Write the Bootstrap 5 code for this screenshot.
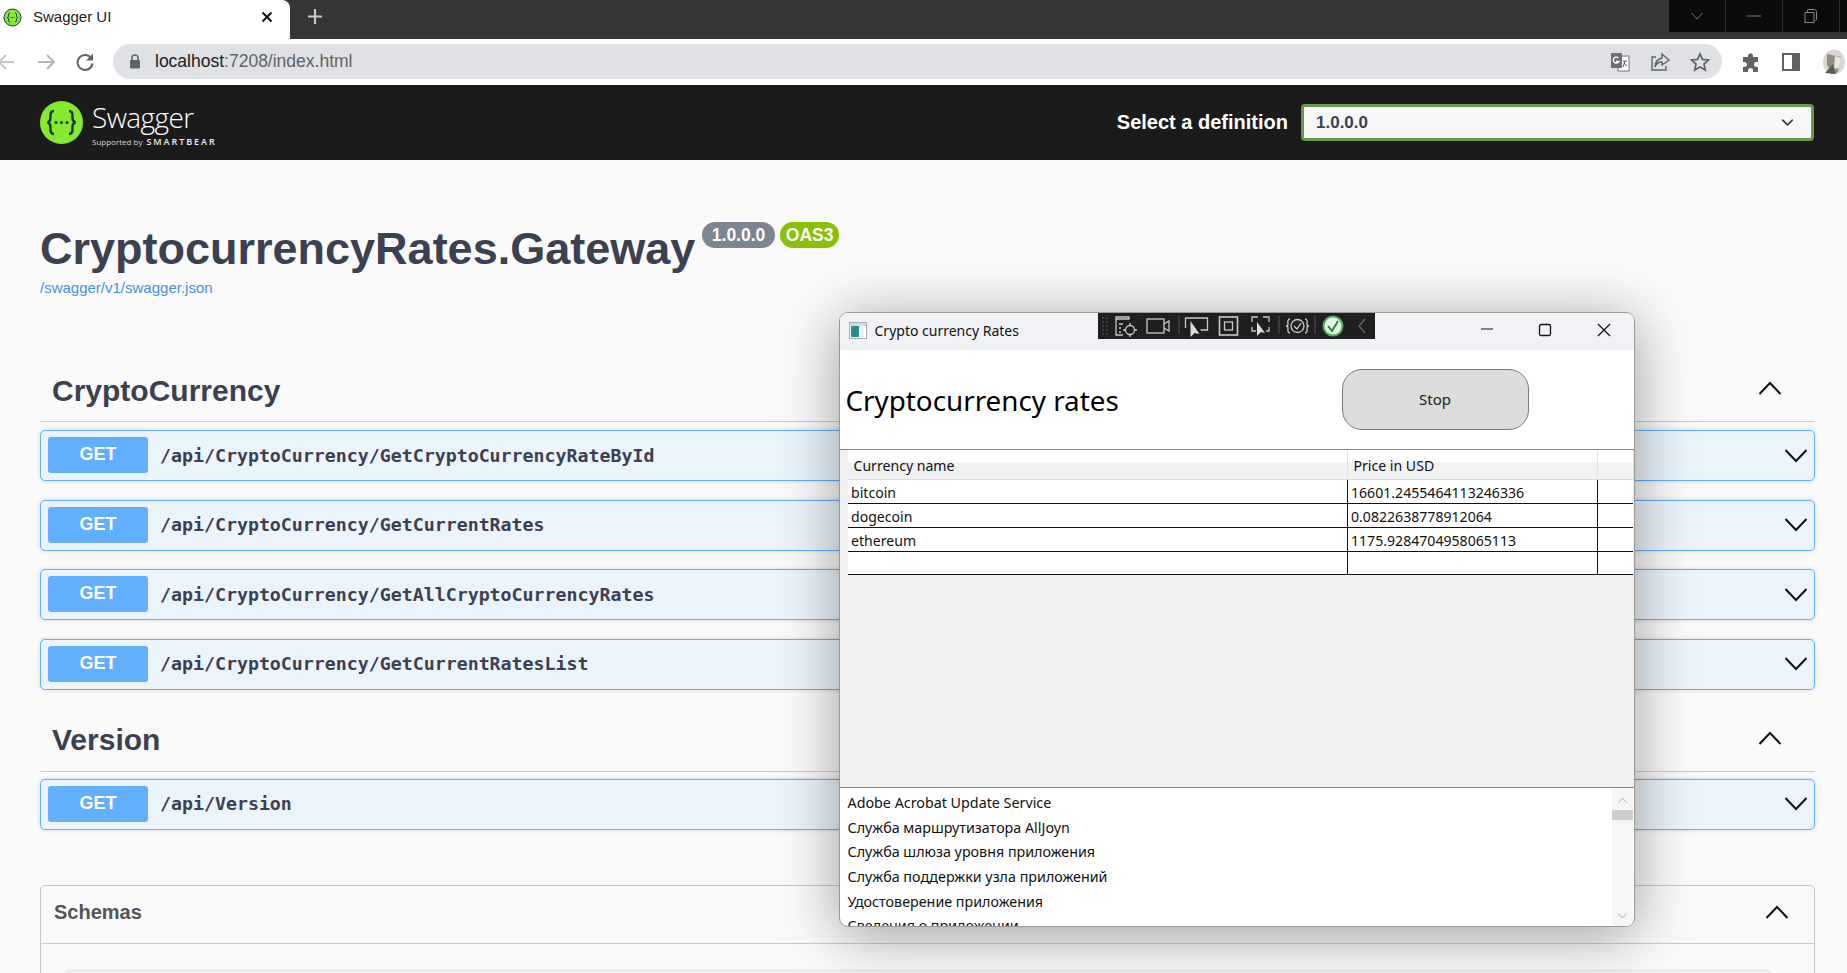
<!DOCTYPE html>
<html lang="en">
<head>
<meta charset="utf-8">
<title>Swagger UI</title>
<link href="https://cdn.jsdelivr.net/npm/bootstrap@5.3.0/dist/css/bootstrap.min.css" rel="stylesheet">
<style>
html,body{height:973px;overflow:hidden;background:#fafafa;}
body{font-family:"Liberation Sans",Arial,sans-serif;color:#3b4151;}
svg{display:block;flex:none;}
.tabstrip{height:39px;background:#353535;}
.browser-tab{width:290px;background:#fff;color:#202124;font-size:15px;padding:0 0 5px 3px;border-top-right-radius:8px;}
.tab-label{margin-left:11px;}
.tab-close{margin-left:auto;margin-right:17px;}
.newtab{margin-left:17px;}
.win-ctrls{height:32px;background:#0b0b0b;width:178px;}
.win-ctrl{width:57px;border-right:1px solid #2e2e2e;}
.toolbar{height:46px;background:#fff;}
.omni{width:1609px;height:35px;margin-left:24px;margin-top:-1px;background:#dfe1e5;border-radius:18px;padding:0 12px 0 16px;font-size:17.5px;}
.url-host{color:#202124;margin-left:14px;}
.url-rest{color:#5f6368;}
.tool-gap{gap:20px;}
.ext-icons{margin-left:20px;gap:22px;}
.swagger-bar{height:75px;background:#1b1b1b;padding:0 33px 0 40px;}
.brand-block{margin-left:9px;margin-top:3px;}
.brand-name{font-family:"Open Sans",sans-serif;font-weight:300;color:#fff;font-size:28px;line-height:30px;letter-spacing:-.6px;}
.brand-sub{font-family:"Open Sans",sans-serif;color:#d8d8d8;font-size:8px;line-height:10px;margin-top:5px;}
.brand-sub b{font-size:9px;letter-spacing:1.95px;margin-left:2px;color:#eee;font-weight:600;}
.def-label{color:#fff;font-weight:700;font-size:20px;margin-right:13px;margin-top:-2px;}
.def-select{width:513px;height:37px;padding:0 12px;font-weight:700;font-size:17px;color:#3b4151;background-color:#f7f7f7;border:3px solid #6a9a4e;border-radius:4px;background-size:17px 13px;background-position:right 15px center;}
.page-main{padding:0 32px 0 40px;height:813px;overflow:hidden;}
.info-block{padding-top:62px;height:198px;}
.api-title{font-size:45px;font-weight:700;line-height:54px;margin:0;color:#3b4151;}
.ver-pill{font-size:17.5px;height:26px;line-height:20px;padding:3px 9.5px;margin-left:7px;margin-top:0;border-radius:13px;}
.pill-grey{background:#7d8492;color:#fff;}
.pill-green{background:#89bf04;color:#fff;padding:3px 6px;margin-left:5px;}
.spec-link{font-size:15px;color:#4990e2;text-decoration:none;line-height:18px;display:block;margin-top:3px;}
.tag-row{height:64px;border-bottom:1.5px solid #c9cacd;padding-left:12px;padding-right:33px;}
.tag-name{font-size:30px;font-weight:700;color:#3b4151;margin:0;padding-top:2px;}
.tag-chev{margin-bottom:3px;}
.op-row{height:51px;margin-top:18.5px;background:#ebf3fb;border:1.5px solid #61affe;border-radius:5px;padding:0 6px 0 7px;box-shadow:0 0 4px rgba(0,0,0,.15);}
.op-first{margin-top:8px;}
.op-first-v{margin-top:7px;}
.op-verb{width:100px;height:36px;background:#61affe;color:#fff;font-weight:700;font-size:18px;border-radius:3px;margin-top:-1px;padding:0;border:0;line-height:34px;}
.op-path{font-family:"DejaVu Sans Mono",monospace;font-weight:700;font-size:18.25px;color:#3b4151;margin-left:12px;}
.tag-version{margin-top:18px;}
.schemas-box{margin-top:55.5px;height:120px;border:1.5px solid #c5c6c9;border-radius:5px;}
.schemas-head{height:58px;border-bottom:1.5px solid #c9cacd;padding:0 25px 6px 13px;font-size:20px;font-weight:700;color:#555;}
.schemas-inner{height:30px;margin:25px 43px 0 25px;background:#eee;border-radius:4px;}
.desk-win{position:absolute;left:838.5px;top:312px;width:796px;height:615px;background:#fff;border:1px solid #9a9a9a;border-radius:9px;box-shadow:0 8px 60px rgba(0,0,0,.38);overflow:hidden;font-family:"Noto Sans",sans-serif;color:#111;z-index:5;}
.win-title{height:37px;background:#f0f2f6;font-size:14px;padding:0 0 2px 9px;position:relative;}
.win-title-text{margin-left:8px;}
.dev-bar{position:absolute;left:258px;top:0;}
.win-btns{position:absolute;left:641.5px;top:8px;}
.win-head{height:99px;padding-left:6px;}
.win-h{font-size:27.8px;margin:0;font-weight:400;color:#000;padding-top:3px;width:496px;}
.stop-btn{width:187px;height:61px;background:#dcdcdc;border:1.5px solid #7a7a7a;border-radius:20px;font-size:15px;color:#222;padding:0;font-family:inherit;}
.grid-area{height:339px;background:#f0f0f0;border-top:1.5px solid #6d8aa6;border-bottom:1.5px solid #6d8aa6;}
.rates-grid{width:100%;border-collapse:collapse;table-layout:fixed;font-size:14.1px;}
.rates-grid col.c0{width:8px;}
.rates-grid col.c1{width:499.5px;}
.rates-grid col.c2{width:250.5px;}
.rates-grid th{height:29px;font-weight:400;padding:2px 0 0 6px;background:linear-gradient(#fff 40%,#f0f1f3 45%,#f1f2f4);border-right:1px solid #e3e3e3;border-bottom:1px solid #dadada;}
.rates-grid td{height:23.6px;padding:3px 0 0 3.5px;background:#fff;border-right:1.5px solid #111;border-bottom:1.5px solid #111;line-height:20px;vertical-align:bottom;}
.rates-grid th.stub,.rates-grid td.stub{background:#f0f0f0;border:0;padding:0;}
.rates-grid td:last-child{border-right:0;}
.svc-list{height:138px;overflow:hidden;position:relative;padding:3px 0 0 8px;font-size:14.3px;}
.svc-item{height:24.7px;line-height:24.7px;padding:0;border:0;background:transparent;color:#111;white-space:nowrap;}
.svc-scroll{position:absolute;right:1px;top:0;bottom:0;width:21px;background:#f6f6f6;}
.svc-thumb{position:absolute;left:0;right:0;top:22px;height:10px;background:#cdcdcd;}
.svc-up{position:absolute;left:6px;top:9px;}
.svc-down{position:absolute;left:6px;bottom:7px;}
</style>
</head>
<body>
<div class="tabstrip d-flex align-items-start">
  <div class="browser-tab d-flex align-items-center h-100">
    <svg width="19" height="19" viewBox="0 0 19 19"><circle cx="9.500" cy="9.500" r="8.500" fill="#85ea2d" stroke="#173647" stroke-width="1"/><path d="M7 5c-2 0-1.500 2-1.500 3s-.5 1.500-1.500 1.500c1 0 1.500.5 1.500 1.500s-.5 3 1.500 3M12 5c2 0 1.500 2 1.500 3s.5 1.500 1.500 1.500c-1 0-1.500.5-1.500 1.500s.5 3-1.500 3" fill="none" stroke="#173647"/><path d="M7.500 9.500h4" stroke="#173647" stroke-dasharray="1 .7"/></svg>
    <span class="tab-label">Swagger UI</span>
    <svg class="tab-close" width="12" height="12" viewBox="0 0 12 12"><path d="M1.500 1.500l9 9M10.500 1.500l-9 9" stroke="#111" stroke-width="2"/></svg>
  </div>
  <svg class="newtab" width="16" height="33" viewBox="0 0 16 33"><path d="M8 9v15M1 16.500h14" stroke="#c8c8c8" stroke-width="2.200"/></svg>
  <div class="win-ctrls d-flex ms-auto">
    <div class="win-ctrl d-flex align-items-center justify-content-center"><svg width="12" height="8" viewBox="0 0 12 8"><path d="M.5 1l5.500 6 5.500-6" fill="none" stroke="#777"/></svg></div>
    <div class="win-ctrl d-flex align-items-center justify-content-center"><svg width="14" height="2" viewBox="0 0 14 2"><path d="M0 1h14" stroke="#777"/></svg></div>
    <div class="win-ctrl d-flex align-items-center justify-content-center"><svg width="14" height="14" viewBox="0 0 14 14"><path d="M3.500 3v-1.500c0-.5.5-1 1-1h6c1 0 2 1 2 2v8c0 .5-.5 1-1 1M1 3.500h9v10h-9z" fill="none" stroke="#888"/></svg></div>
  </div>
</div>
<div class="toolbar d-flex align-items-center">
  <svg width="89" height="46" viewBox="0 0 89 46"><path d="M-1 23h15M6 16l-7 7 7 7" fill="none" stroke="#c4c6c9" stroke-width="2"/><path d="M38 23h16M47 16l7 7-7 7" fill="none" stroke="#b4b6b9" stroke-width="2"/></svg>
  <svg class="reload-ico" width="20" height="20" viewBox="0 0 20 20" style="margin-left:-14px;margin-right:-6px"><path d="M16.500 6.500a7.500 7.500 0 1 0 1 5" fill="none" stroke="#5f6368" stroke-width="2"/><path d="M18 1.500v7h-7z" fill="#5f6368"/></svg>
  <div class="omni d-flex align-items-center">
    <svg width="12" height="15" viewBox="0 0 12 15"><path d="M3 6V4a3 3 0 0 1 6 0v2" fill="none" stroke="#5f6368" stroke-width="1.600"/><rect x="1" y="6" width="10" height="8.500" rx="1.200" fill="#5f6368"/></svg>
    <span class="url-host">localhost<span class="url-rest">:7208/index.html</span></span>
    <div class="d-flex align-items-center ms-auto tool-gap">
      <svg width="20" height="20" viewBox="0 0 20 20"><rect x="8" y="4" width="11" height="15" fill="#fff" stroke="#777"/><rect x="1" y="1" width="11" height="15" rx="1" fill="#6b6f74"/><path d="M8.500 6a3 3 0 1 0 .5 3.500h-3" fill="none" stroke="#fff" stroke-width="1.400"/><path d="M13 9h4M15 9l-2 6M14 11l3 3" fill="none" stroke="#555"/></svg>
      <svg width="20" height="20" viewBox="0 0 20 20"><path d="M6 5H2v13h14v-4" fill="none" stroke="#5f6368" stroke-width="1.400"/><path d="M12 2l7 6-7 5v-3c-4 0-6 2-7 5 0-5 3-8 7-9z" fill="none" stroke="#5f6368" stroke-width="1.400"/></svg>
      <svg width="20" height="20" viewBox="0 0 20 20"><path d="M10 1.800l2.500 5.600 6 .6-4.500 4.100 1.300 6-5.300-3.100-5.300 3.100 1.300-6L1.500 8l6-.6z" fill="none" stroke="#5f6368" stroke-width="1.700"/></svg>
    </div>
  </div>
  <div class="d-flex align-items-center ext-icons">
    <svg width="18" height="19" viewBox="0 0 18 19"><path d="M7 1a2.300 2.300 0 0 1 4 1.500V4h5v5h-1.500a2.500 2.500 0 0 0 0 5H16v5H11v-1.500a2.500 2.500 0 0 0-5 0V19H1v-5h1.500a2.500 2.500 0 0 0 0-5H1V4h5V2.500c0-.5.300-1 1-1.500z" fill="#5f6368"/></svg>
    <svg width="18" height="18" viewBox="0 0 18 18"><rect x="1" y="1" width="16" height="16" fill="none" stroke="#5f6368" stroke-width="2"/><rect x="10" y="1" width="7" height="16" fill="#5f6368"/></svg>
    <svg width="24" height="26" viewBox="0 0 24 26"><ellipse cx="12" cy="13" rx="11" ry="12.500" fill="#d9d6cf"/><path d="M5 5l14 3-3 15-6 2-5-9z" fill="#8f8f88"/><path d="M13 7l6 2-2 10-5 1z" fill="#ece6dc"/><path d="M3 24l8-9 3 10z" fill="#5a5d60"/></svg>
  </div>
</div>

<nav class="swagger-bar d-flex align-items-center justify-content-between">
  <div class="d-flex align-items-center">
    <svg width="43" height="43" viewBox="0 0 43 43"><circle cx="21.500" cy="21.500" r="21.500" fill="#85ea2d"/><path d="M14 10c-4 0-3.500 4-3.500 7 0 3-1 4-3 4.500 2 .5 3 1.500 3 4.500 0 3-.5 7 3.500 7M29 10c4 0 3.500 4 3.500 7 0 3 1 4 3 4.500-2 .5-3 1.500-3 4.500 0 3 .5 7-3.500 7" fill="none" stroke="#173647" stroke-width="2.400"/><circle cx="16" cy="21.500" r="1.500" fill="#173647"/><circle cx="21.500" cy="21.500" r="1.500" fill="#173647"/><circle cx="27" cy="21.500" r="1.500" fill="#173647"/></svg>
    <div class="brand-block">
      <div class="brand-name">Swagger</div>
      <div class="brand-sub">Supported by <b>SMARTBEAR</b></div>
    </div>
  </div>
  <div class="d-flex align-items-center">
    <span class="def-label">Select a definition</span>
    <select class="form-select def-select"><option>1.0.0.0</option></select>
  </div>
</nav>

<main class="page-main">
  <div class="info-block">
    <div class="d-flex align-items-start">
      <h2 class="api-title">CryptocurrencyRates.Gateway</h2>
      <span class="badge ver-pill pill-grey">1.0.0.0</span>
      <span class="badge ver-pill pill-green">OAS3</span>
    </div>
    <a class="spec-link" href="#">/swagger/v1/swagger.json</a>
  </div>

  <section>
    <div class="tag-row d-flex align-items-center justify-content-between">
      <h3 class="tag-name">CryptoCurrency</h3>
      <svg class="tag-chev" width="24" height="14" viewBox="0 0 24 14"><path d="M1.500 13L12 2l10.500 11" fill="none" stroke="#111" stroke-width="2"/></svg>
    </div>
    <div class="op-row op-first d-flex align-items-center justify-content-between">
      <div class="d-flex align-items-center"><span class="op-verb btn">GET</span><span class="op-path">/api/CryptoCurrency/GetCryptoCurrencyRateById</span></div>
      <svg width="24" height="14" viewBox="0 0 24 14"><path d="M1.500 1L12 12 22.500 1" fill="none" stroke="#111" stroke-width="2"/></svg>
    </div>
    <div class="op-row d-flex align-items-center justify-content-between">
      <div class="d-flex align-items-center"><span class="op-verb btn">GET</span><span class="op-path">/api/CryptoCurrency/GetCurrentRates</span></div>
      <svg width="24" height="14" viewBox="0 0 24 14"><path d="M1.500 1L12 12 22.500 1" fill="none" stroke="#111" stroke-width="2"/></svg>
    </div>
    <div class="op-row d-flex align-items-center justify-content-between">
      <div class="d-flex align-items-center"><span class="op-verb btn">GET</span><span class="op-path">/api/CryptoCurrency/GetAllCryptoCurrencyRates</span></div>
      <svg width="24" height="14" viewBox="0 0 24 14"><path d="M1.500 1L12 12 22.500 1" fill="none" stroke="#111" stroke-width="2"/></svg>
    </div>
    <div class="op-row d-flex align-items-center justify-content-between">
      <div class="d-flex align-items-center"><span class="op-verb btn">GET</span><span class="op-path">/api/CryptoCurrency/GetCurrentRatesList</span></div>
      <svg width="24" height="14" viewBox="0 0 24 14"><path d="M1.500 1L12 12 22.500 1" fill="none" stroke="#111" stroke-width="2"/></svg>
    </div>
  </section>

  <section class="tag-version">
    <div class="tag-row d-flex align-items-center justify-content-between">
      <h3 class="tag-name">Version</h3>
      <svg class="tag-chev" width="24" height="14" viewBox="0 0 24 14"><path d="M1.500 13L12 2l10.500 11" fill="none" stroke="#111" stroke-width="2"/></svg>
    </div>
    <div class="op-row op-first-v d-flex align-items-center justify-content-between">
      <div class="d-flex align-items-center"><span class="op-verb btn">GET</span><span class="op-path">/api/Version</span></div>
      <svg width="24" height="14" viewBox="0 0 24 14"><path d="M1.500 1L12 12 22.500 1" fill="none" stroke="#111" stroke-width="2"/></svg>
    </div>
  </section>

  <section class="schemas-box">
    <div class="schemas-head d-flex align-items-center justify-content-between">
      <span>Schemas</span>
      <svg width="24" height="14" viewBox="0 0 24 14"><path d="M1.500 13L12 2l10.500 11" fill="none" stroke="#111" stroke-width="2"/></svg>
    </div>
    <div class="schemas-inner"></div>
  </section>
</main>

<div class="desk-win">
  <div class="win-title d-flex align-items-center">
    <svg width="18" height="17" viewBox="0 0 18 17"><rect x=".5" y=".5" width="17" height="16" fill="#fff" stroke="#aab"/><rect x="1" y="1" width="16" height="3" fill="#d5dbe4"/><rect x="2" y="4" width="8" height="11" fill="#2f8a8a"/><rect x="10" y="4" width="5" height="11" fill="#eef1f4"/></svg>
    <span class="win-title-text">Crypto currency Rates</span>
    <svg class="dev-bar" width="277" height="26" viewBox="0 0 277 26" fill="none" stroke="#c9c9c9" stroke-width="1.300">
      <rect width="277" height="26" fill="#1f1f1f" stroke="none"/>
      <path d="M5 5h.01M5 9h.01M5 13h.01M5 17h.01M5 21h.01M9 5h.01M9 9h.01M9 13h.01M9 17h.01M9 21h.01" stroke="#666" stroke-width="1.500" stroke-linecap="round"/>
      <g transform="translate(-2 0)"><path d="M20 4h13v2H20zM20 4v18h7M23 11h4M23 15h2M23 19h2"/><circle cx="34" cy="17" r="4.500"/><path d="M34 10v3M34 21v3M27 17h3M38 17h3"/></g>
      <rect x="49" y="6" width="17" height="14"/><path d="M66 11l5-3v10l-5-3"/>
      <path d="M81 3v18" stroke="#4a4a4a"/>
      <g transform="translate(-4.500 0)"><path d="M92 10V5h22v12h-7M92 10v5"/><path d="M97 8v16l4-4 5 1z" fill="#ddd" stroke="none"/></g>
      <g transform="translate(-7.500 0)"><rect x="129" y="4" width="18" height="18" stroke-width="1.600"/><rect x="134" y="9" width="8" height="8"/></g>
      <g transform="translate(-7 0)"><path d="M161 9V4h6M172 4h6v5M161 14v4h4M178 14v4h-3"/><path d="M166 9v14l4-4 4 1z" fill="#ddd" stroke="none"/></g>
      <path d="M181 3v18" stroke="#4a4a4a"/>
      <g transform="translate(-2 0)"><path d="M194 6c-3 0-2 4-2 5s-1 2-2 2c1 0 2 1 2 2s-1 5 2 5M209 6c3 0 2 4 2 5s1 2 2 2c-1 0-2 1-2 2s1 5-2 5"/><circle cx="201.500" cy="13" r="6.500"/><path d="M198 13l3 3 4-6"/></g>
      <path d="M217 3v18" stroke="#4a4a4a"/>
      <circle cx="235" cy="13" r="9.500" fill="#e8f5e9" stroke="#4fae5b" stroke-width="2"/><path d="M230 13l4 5 6-10" stroke="#1f8a38" stroke-width="2"/>
      <path d="M267 6l-6 7 6 7" stroke="#666"/>
    </svg>
    <svg class="win-btns" width="131" height="16" viewBox="0 0 131 16" fill="none" stroke="#111" stroke-width="1"><path d="M0 8h12"/><rect x="58.500" y="3.500" width="11" height="11" rx="1.500" stroke-width="1.300"/><path d="M117 3l12 12M129 3l-12 12" stroke-width="1.200"/></svg>
  </div>
  <div class="win-head d-flex align-items-center">
    <h1 class="win-h">Cryptocurrency rates</h1>
    <button class="stop-btn btn" type="button">Stop</button>
  </div>
  <div class="grid-area">
    <table class="rates-grid">
      <colgroup><col class="c0"><col class="c1"><col class="c2"><col></colgroup>
      <thead><tr><th class="stub"></th><th>Currency name</th><th>Price in USD</th><th></th></tr></thead>
      <tbody>
        <tr><td class="stub"></td><td>bitcoin</td><td>16601.2455464113246336</td><td></td></tr>
        <tr><td class="stub"></td><td>dogecoin</td><td>0.0822638778912064</td><td></td></tr>
        <tr><td class="stub"></td><td>ethereum</td><td>1175.9284704958065113</td><td></td></tr>
        <tr><td class="stub"></td><td></td><td></td><td></td></tr>
      </tbody>
    </table>
  </div>
  <div class="svc-list">
    <div class="list-group list-group-flush">
      <div class="list-group-item svc-item">Adobe Acrobat Update Service</div>
      <div class="list-group-item svc-item">Служба маршрутизатора AllJoyn</div>
      <div class="list-group-item svc-item">Служба шлюза уровня приложения</div>
      <div class="list-group-item svc-item">Служба поддержки узла приложений</div>
      <div class="list-group-item svc-item">Удостоверение приложения</div>
      <div class="list-group-item svc-item">Сведения о приложении</div>
    </div>
    <div class="svc-scroll">
      <svg class="svc-up" width="9" height="6" viewBox="0 0 9 6"><path d="M.5 5.500L4.500 1l4 4.500" fill="none" stroke="#aaa"/></svg>
      <div class="svc-thumb"></div>
      <svg class="svc-down" width="9" height="6" viewBox="0 0 9 6"><path d="M.5.500L4.500 5l4-4.500" fill="none" stroke="#aaa"/></svg>
    </div>
  </div>
</div>
</body>
</html>
